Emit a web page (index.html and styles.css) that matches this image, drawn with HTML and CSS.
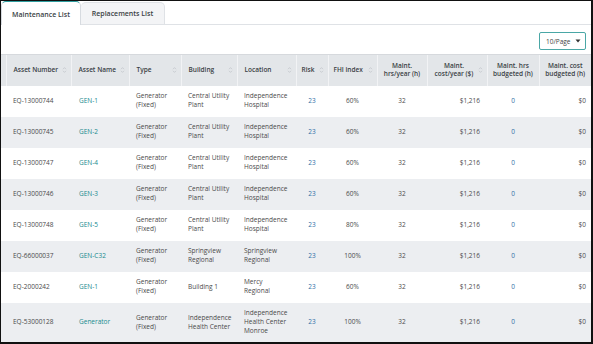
FILE: index.html
```html
<!DOCTYPE html>
<html>
<head>
<meta charset="utf-8">
<link rel="stylesheet" href="styles.css">
</head>
<body>
<div class="frame">
  <div class="tabs">
    <div class="tab tab-active">Maintenance List</div>
    <div class="tab tab-idle">Replacements List</div>
    <div class="tab-fill"></div>
  </div>
  <div class="toolbar">
    <div class="select">
      <span>10/Page</span>
      <svg class="caret" width="6" height="4" viewBox="0 0 6 4"><path d="M0.5 0.5 H5.5 L3 3.5 Z" fill="#333"/></svg>
    </div>
  </div>
  <table class="grid">
    <colgroup>
      <col style="width:5px"><col style="width:65px"><col style="width:58px"><col style="width:52px"><col style="width:56px"><col style="width:59px"><col style="width:32px"><col style="width:49px"><col style="width:50px"><col style="width:60px"><col style="width:52px"><col style="width:52px">
    </colgroup>
    <thead>
      <tr>
        <th class="lead"></th>
        <th><div class="hcell"><span>Asset Number</span><svg class="sort" width="5" height="8" viewBox="0 0 5 8"><path d="M1 3.2 L2.5 1.6 L4 3.2 M1 4.8 L2.5 6.4 L4 4.8" fill="none" stroke="#c3c7cc" stroke-width="0.8"/></svg></div></th>
        <th><div class="hcell"><span>Asset Name</span><svg class="sort" width="5" height="8" viewBox="0 0 5 8"><path d="M1 3.2 L2.5 1.6 L4 3.2 M1 4.8 L2.5 6.4 L4 4.8" fill="none" stroke="#c3c7cc" stroke-width="0.8"/></svg></div></th>
        <th><div class="hcell"><span>Type</span><svg class="sort" width="5" height="8" viewBox="0 0 5 8"><path d="M1 3.2 L2.5 1.6 L4 3.2 M1 4.8 L2.5 6.4 L4 4.8" fill="none" stroke="#c3c7cc" stroke-width="0.8"/></svg></div></th>
        <th><div class="hcell"><span>Building</span><svg class="sort" width="5" height="8" viewBox="0 0 5 8"><path d="M1 3.2 L2.5 1.6 L4 3.2 M1 4.8 L2.5 6.4 L4 4.8" fill="none" stroke="#c3c7cc" stroke-width="0.8"/></svg></div></th>
        <th><div class="hcell"><span>Location</span><svg class="sort" width="5" height="8" viewBox="0 0 5 8"><path d="M1 3.2 L2.5 1.6 L4 3.2 M1 4.8 L2.5 6.4 L4 4.8" fill="none" stroke="#c3c7cc" stroke-width="0.8"/></svg></div></th>
        <th class="narrow"><div class="hcell"><span>Risk</span><svg class="sort" width="5" height="8" viewBox="0 0 5 8"><path d="M1 3.2 L2.5 1.6 L4 3.2 M1 4.8 L2.5 6.4 L4 4.8" fill="none" stroke="#c3c7cc" stroke-width="0.8"/></svg></div></th>
        <th class="narrow"><div class="hcell"><span>FHI index</span><svg class="sort" width="5" height="8" viewBox="0 0 5 8"><path d="M1 3.2 L2.5 1.6 L4 3.2 M1 4.8 L2.5 6.4 L4 4.8" fill="none" stroke="#c3c7cc" stroke-width="0.8"/></svg></div></th>
        <th class="center">Maint.<br>hrs/year (h)</th>
        <th class="narrow"><div class="hcell"><span class="hcenter">Maint.<br>cost/year ($)</span><svg class="sort" width="5" height="8" viewBox="0 0 5 8"><path d="M1 3.2 L2.5 1.6 L4 3.2 M1 4.8 L2.5 6.4 L4 4.8" fill="none" stroke="#c3c7cc" stroke-width="0.8"/></svg></div></th>
        <th class="center">Maint. hrs<br>budgeted (h)</th>
        <th class="center">Maint. cost<br>budgeted (h)</th>
      </tr>
    </thead>
    <tbody>
      <tr>
        <td class="lead"></td><td>EQ-13000744</td><td class="link">GEN-1</td><td>Generator<br>(Fixed)</td><td>Central Utility<br>Plant</td><td>Independence<br>Hospital</td><td class="num center">23</td><td class="center">60%</td><td class="center">32</td><td class="right">$1,216</td><td class="num center">0</td><td class="right last">$0</td>
      </tr>
      <tr class="alt">
        <td class="lead"></td><td>EQ-13000745</td><td class="link">GEN-2</td><td>Generator<br>(Fixed)</td><td>Central Utility<br>Plant</td><td>Independence<br>Hospital</td><td class="num center">23</td><td class="center">60%</td><td class="center">32</td><td class="right">$1,216</td><td class="num center">0</td><td class="right last">$0</td>
      </tr>
      <tr>
        <td class="lead"></td><td>EQ-13000747</td><td class="link">GEN-4</td><td>Generator<br>(Fixed)</td><td>Central Utility<br>Plant</td><td>Independence<br>Hospital</td><td class="num center">23</td><td class="center">60%</td><td class="center">32</td><td class="right">$1,216</td><td class="num center">0</td><td class="right last">$0</td>
      </tr>
      <tr class="alt">
        <td class="lead"></td><td>EQ-13000746</td><td class="link">GEN-3</td><td>Generator<br>(Fixed)</td><td>Central Utility<br>Plant</td><td>Independence<br>Hospital</td><td class="num center">23</td><td class="center">60%</td><td class="center">32</td><td class="right">$1,216</td><td class="num center">0</td><td class="right last">$0</td>
      </tr>
      <tr>
        <td class="lead"></td><td>EQ-13000748</td><td class="link">GEN-5</td><td>Generator<br>(Fixed)</td><td>Central Utility<br>Plant</td><td>Independence<br>Hospital</td><td class="num center">23</td><td class="center">80%</td><td class="center">32</td><td class="right">$1,216</td><td class="num center">0</td><td class="right last">$0</td>
      </tr>
      <tr class="alt">
        <td class="lead"></td><td>EQ-66000037</td><td class="link">GEN-C32</td><td>Generator<br>(Fixed)</td><td>Springview<br>Regional</td><td>Springview<br>Regional</td><td class="num center">23</td><td class="center">100%</td><td class="center">32</td><td class="right">$1,216</td><td class="num center">0</td><td class="right last">$0</td>
      </tr>
      <tr>
        <td class="lead"></td><td>EQ-2000242</td><td class="link">GEN-1</td><td>Generator<br>(Fixed)</td><td>Building 1</td><td>Mercy<br>Regional</td><td class="num center">23</td><td class="center">60%</td><td class="center">32</td><td class="right">$1,216</td><td class="num center">0</td><td class="right last">$0</td>
      </tr>
      <tr class="alt tall">
        <td class="lead"></td><td>EQ-53000128</td><td class="link">Generator</td><td>Generator<br>(Fixed)</td><td>Independence<br>Health Center</td><td>Independence<br>Health Center<br>Monroe</td><td class="num center">23</td><td class="center">100%</td><td class="center">32</td><td class="right">$1,216</td><td class="num center">0</td><td class="right last">$0</td>
      </tr>
    </tbody>
  </table>
</div>
</body>
</html>
```

FILE: styles.css
```css
* { box-sizing: border-box; }
html, body { margin: 0; padding: 0; background: #fff; }
body { font-family: "Open Sans", "Liberation Sans", sans-serif; color: #4a4a4a; }

.frame {
  width: 593px;
  height: 344px;
  border-top: 1px solid #111;
  border-left: 1px solid #111;
  border-right: 2px solid #111;
  border-bottom: 2px solid #111;
  overflow: hidden;
  background: #fff;
}

.tabs {
  display: flex;
  height: 24px;
}
.tab {
  font-size: 7px;
  font-weight: 600;
  color: #3a3f45;
  display: flex;
  align-items: center;
  justify-content: center;
  border-radius: 5px 5px 0 0;
}
.tab-active {
  width: 80px;
  border: 1px solid #d7dbe0;
  border-top: 1px solid #2f9ea0;
  border-bottom: none;
  padding-top: 1px;
}
.tab-idle {
  width: 84px;
  margin-top: 1px;
  background: #f3f4f6;
  border: 1px solid #dfe2e6;
  border-left: none;
}
.tab-fill {
  flex: 1;
  border-bottom: 1px solid #dfe2e6;
}

.toolbar {
  height: 29px;
  display: flex;
  justify-content: flex-end;
  padding: 7px 5px 0 0;
}
.select {
  width: 47px;
  height: 18px;
  border: 1px solid #4aa7a6;
  border-radius: 2px;
  display: flex;
  align-items: center;
  justify-content: space-between;
  padding: 0 4px 0 6px;
  font-size: 6.5px;
  color: #444;
}
.caret { display: block; }

.grid {
  width: 590px;
  table-layout: fixed;
  border-collapse: collapse;
  font-size: 6.5px;
  line-height: 8.7px;
}
.grid th {
  background: #e3e6e9;
  height: 31px;
  font-weight: 600;
  color: #3a3f45;
  text-align: left;
  padding: 0 4px 0 7px;
  border-left: 1px solid #f2f3f5;
  border-top: 1px solid #d6d9dd;
  vertical-align: middle;
}
.grid th.lead { border-left: none; padding: 0; }
.grid th.narrow { padding-left: 5px; }
.grid th.center { text-align: center; padding: 0 2px; }
.hcell {
  display: flex;
  align-items: center;
  justify-content: space-between;
}
.hcenter { flex: 1; text-align: center; }
.sort { display: block; flex: none; margin-left: 2px; }

.grid td {
  height: 31px;
  padding: 0 4px 0 7px;
  vertical-align: middle;
  white-space: nowrap;
}
.grid td.lead { padding: 0; }
.grid tr.alt td { background: #eceef1; }
.grid tr.tall td { height: 40px; }
.grid td.center { text-align: center; padding: 0 2px; }
.grid td.right { text-align: right; padding: 0 7px 0 2px; }
.grid td.last { padding-right: 5px; }
.grid td.link { color: #178a8e; padding-left: 8px; }
.grid td.num { color: #2f6fa6; }
```
